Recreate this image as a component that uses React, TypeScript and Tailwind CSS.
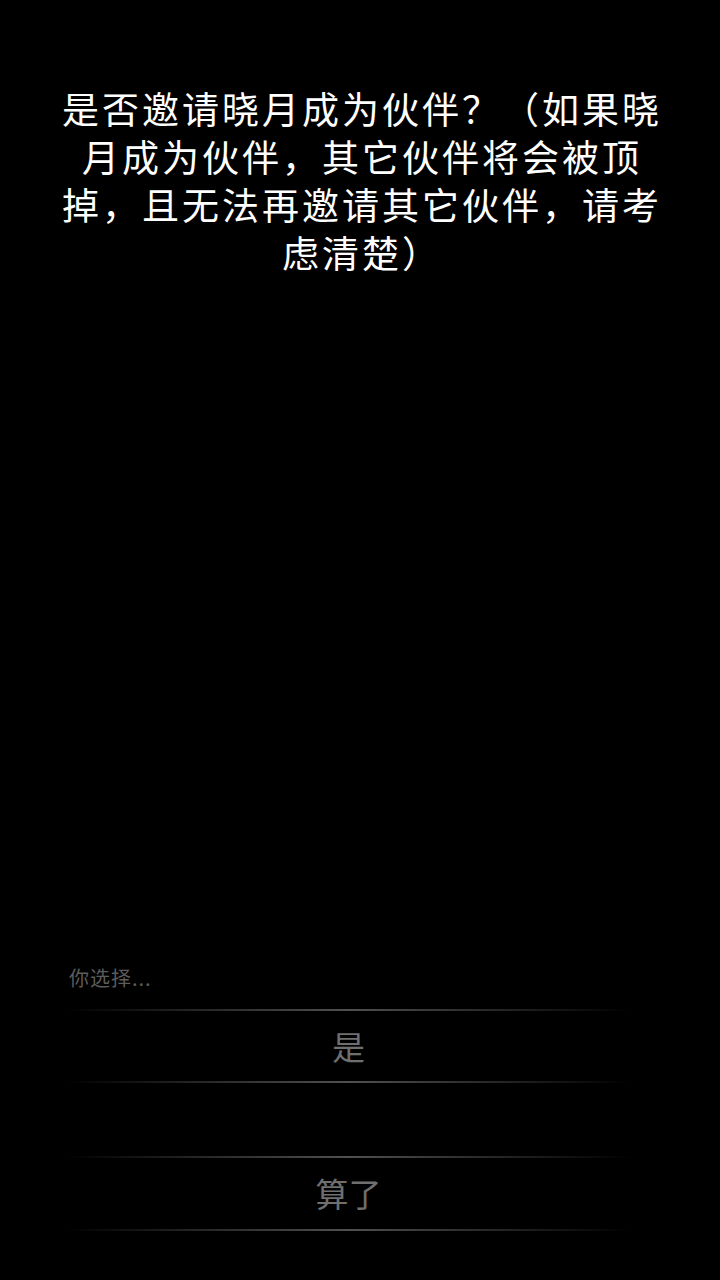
const font = { fontFamily: '"Noto Sans CJK SC", "Noto Sans", sans-serif' };

const Line = () => (
  <div className="h-[2px] w-full bg-linear-to-r from-transparent via-[#505050] to-transparent" />
);

const Choice = ({ label, h }: { label: string; h: string }) => (
  <button
    className={`${h} flex w-full items-center justify-center text-[33px] leading-none text-[#6f6f6f]`}
    style={font}
  >
    {label}
  </button>
);

const App = () => {
  return (
    <div className="flex h-[1280px] w-[720px] flex-col bg-black" style={font}>
      <div className="pt-[84px]">
        <p className="mx-auto w-[620px] pl-[4px] text-center text-[37px] leading-[48px] tracking-[3px] text-white">
          是否邀请晓月成为伙伴？（如果晓月成为伙伴，其它伙伴将会被顶掉，且无法再邀请其它伙伴，请考虑清楚）
        </p>
      </div>
      <div className="flex-1" />
      <div className="pb-[49px]">
        <p className="ml-[69px] text-[20px] leading-[24px] tracking-[1px] text-[#5c5c5c]">
          你选择...
        </p>
        <div className="ml-[65px] mt-[19px] w-[567px]">
          <Line />
          <Choice label="是" h="h-[70px]" />
          <Line />
          <div className="h-[73px]" />
          <Line />
          <Choice label="算了" h="h-[71px]" />
          <Line />
        </div>
      </div>
    </div>
  );
};

export default App;
